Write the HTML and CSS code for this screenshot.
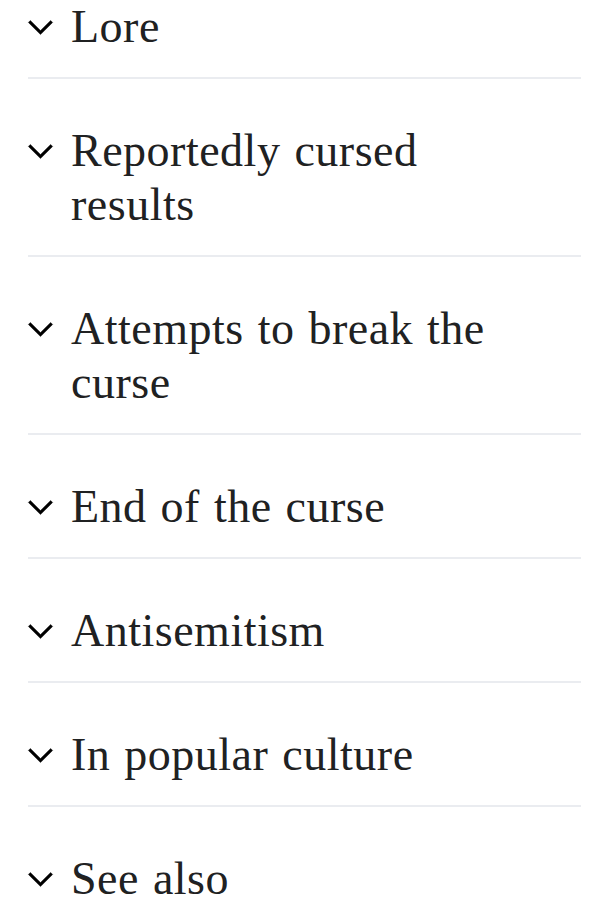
FILE: index.html
```html
<!DOCTYPE html>
<html lang="en">
<head>
    <meta charset="UTF-8">
    <meta name="viewport" content="width=device-width, initial-scale=1.0">
    <title>Sections</title>
    <link rel="stylesheet" href="styles.css">
</head>
<body>
    <!-- Collapsed article sections -->
    <div class="sections">
        <div class="section-heading">
            <span class="toggle"><svg viewBox="0 0 20 20" width="27" height="27"><path d="M17.5 4.75l-7.5 7.5-7.5-7.5L1 6.25l9 9 9-9z"/></svg></span>
            <h2>Lore</h2>
        </div>
        <div class="section-heading">
            <span class="toggle"><svg viewBox="0 0 20 20" width="27" height="27"><path d="M17.5 4.75l-7.5 7.5-7.5-7.5L1 6.25l9 9 9-9z"/></svg></span>
            <h2>Reportedly cursed results</h2>
        </div>
        <div class="section-heading">
            <span class="toggle"><svg viewBox="0 0 20 20" width="27" height="27"><path d="M17.5 4.75l-7.5 7.5-7.5-7.5L1 6.25l9 9 9-9z"/></svg></span>
            <h2>Attempts to break the curse</h2>
        </div>
        <div class="section-heading">
            <span class="toggle"><svg viewBox="0 0 20 20" width="27" height="27"><path d="M17.5 4.75l-7.5 7.5-7.5-7.5L1 6.25l9 9 9-9z"/></svg></span>
            <h2>End of the curse</h2>
        </div>
        <div class="section-heading">
            <span class="toggle"><svg viewBox="0 0 20 20" width="27" height="27"><path d="M17.5 4.75l-7.5 7.5-7.5-7.5L1 6.25l9 9 9-9z"/></svg></span>
            <h2>Antisemitism</h2>
        </div>
        <div class="section-heading">
            <span class="toggle"><svg viewBox="0 0 20 20" width="27" height="27"><path d="M17.5 4.75l-7.5 7.5-7.5-7.5L1 6.25l9 9 9-9z"/></svg></span>
            <h2>In popular culture</h2>
        </div>
        <div class="section-heading">
            <span class="toggle"><svg viewBox="0 0 20 20" width="27" height="27"><path d="M17.5 4.75l-7.5 7.5-7.5-7.5L1 6.25l9 9 9-9z"/></svg></span>
            <h2>See also</h2>
        </div>
    </div>
</body>
</html>
```

FILE: styles.css
```css
/* General */
body {
    margin: 0;
    padding: 0;
    background: #ffffff;
    color: #202122;
    font-family: 'Liberation Serif', 'Times New Roman', serif;
}

/* Section list (page is scrolled, first row cut off) */
.sections {
    margin: -45px 29px 0 28px;
}

.section-heading {
    display: flex;
    align-items: flex-start;
    gap: 17px;
    padding: 45px 50px 23px 0;
    border-bottom: 2px solid #eaecf0;
}

.section-heading:last-child {
    border-bottom: none;
}

.toggle {
    display: flex;
    align-items: center;
    height: 54px;
    margin-left: -1px;
    flex-shrink: 0;
}

.toggle svg {
    fill: #000000;
    stroke: #000000;
    stroke-width: 0.3;
    display: block;
}

.section-heading h2 {
    margin: 0;
    font-size: 46px;
    font-weight: normal;
    line-height: 54px;
    letter-spacing: 0.5px;
    word-spacing: 2px;
}
```
